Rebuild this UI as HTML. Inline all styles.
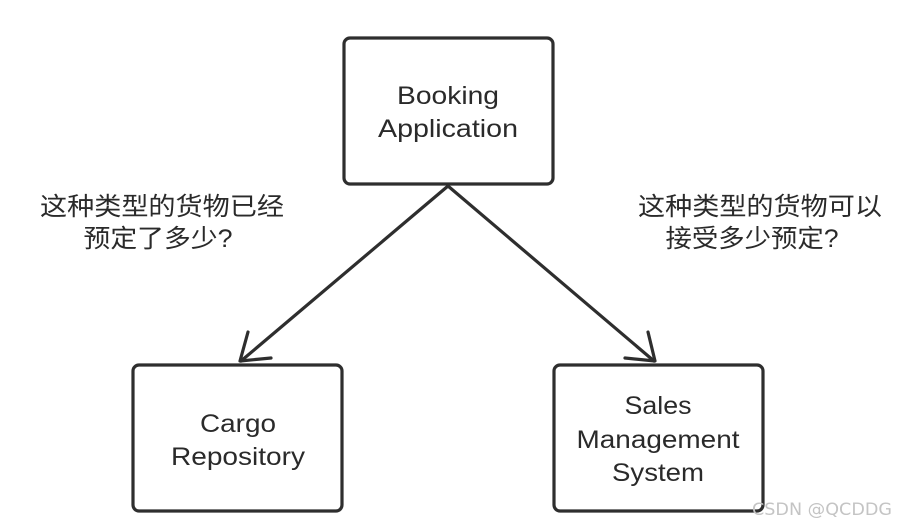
<!DOCTYPE html>
<html><head><meta charset="utf-8"><style>html,body{margin:0;padding:0;background:#fff}svg{display:block}</style></head>
<body>
<svg width="906" height="530" viewBox="0 0 906 530" xmlns="http://www.w3.org/2000/svg">
<g fill="none" stroke="#2e2e2e" stroke-width="3.2" stroke-linejoin="round" stroke-linecap="round">
<rect x="344" y="38" width="209" height="146" rx="6"/>
<rect x="133" y="365" width="209" height="146" rx="6"/>
<rect x="554" y="365" width="209" height="146" rx="6"/>
<line x1="448" y1="186" x2="241" y2="361"/>
<line x1="448" y1="186" x2="654" y2="361"/>
<polyline points="248,332 240,361 271,358"/>
<polyline points="648,332 655,361 625,358"/>
</g>
<g font-family="Liberation Sans, sans-serif" font-size="25" fill="#2a2a2a" text-anchor="middle">
<text x="448" y="104" textLength="102" lengthAdjust="spacingAndGlyphs">Booking</text>
<text x="448" y="137" textLength="140" lengthAdjust="spacingAndGlyphs">Application</text>
<text x="238" y="432" textLength="76" lengthAdjust="spacingAndGlyphs">Cargo</text>
<text x="238" y="465" textLength="134" lengthAdjust="spacingAndGlyphs">Repository</text>
<text x="658" y="414" textLength="67" lengthAdjust="spacingAndGlyphs">Sales</text>
<text x="658" y="448" textLength="163" lengthAdjust="spacingAndGlyphs">Management</text>
<text x="658" y="481" textLength="92" lengthAdjust="spacingAndGlyphs">System</text>
</g>
<g font-family="Liberation Sans, Noto Sans CJK SC, sans-serif" font-size="25" fill="#2a2a2a" text-anchor="middle">
<text x="162" y="215" textLength="244" lengthAdjust="spacingAndGlyphs">这种类型的货物已经</text>
<text x="158" y="247" textLength="149" lengthAdjust="spacingAndGlyphs">预定了多少?</text>
<text x="760" y="215" textLength="244" lengthAdjust="spacingAndGlyphs">这种类型的货物可以</text>
<text x="752" y="247" textLength="173" lengthAdjust="spacingAndGlyphs">接受多少预定?</text>
</g>
<text x="822" y="515" font-family="DejaVu Sans, sans-serif" font-size="17" fill="#c4c4c4" text-anchor="middle" textLength="140" lengthAdjust="spacingAndGlyphs">CSDN @QCDDG</text>
</svg>
</body></html>
